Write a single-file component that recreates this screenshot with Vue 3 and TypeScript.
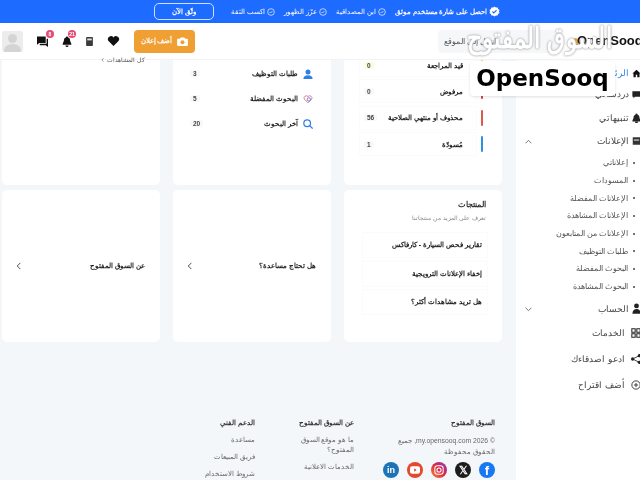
<script setup lang="ts">
const subNav = ['إعلاناتي', 'المسودات', 'الإعلانات المفضلة', 'الإعلانات المشاهدة', 'الإعلانات من المتابعون', 'طلبات التوظيف', 'البحوث المفضلة', 'البحوث المشاهدة'];
const statuses = [
  { label: 'قيد المراجعة', n: '0', color: '#f5d76e', chip: '#fbfbdf' },
  { label: 'مرفوض', n: '0', color: '#d9473f', chip: '#f6f8fa' },
  { label: 'محذوف أو منتهي الصلاحية', n: '56', color: '#d9584f', chip: '#f6f8fa' },
  { label: 'مُسودّة', n: '1', color: '#2f8fe6', chip: '#f6f8fa' },
];
const products = ['تقارير فحص السيارة - كارفاكس', 'إخفاء الإعلانات الترويجية', 'هل تريد مشاهدات أكثر؟'];
const trust = ['ابن المصداقية', 'عزّز الظهور', 'اكسب الثقة'];
</script>

<template>
  <div class="page" dir="rtl">
    <div class="banner">
      <span class="b-main">
        <svg width="11" height="11" viewBox="0 0 24 24"><path fill="#fff" d="M12 1l3 2.400 3.800-.3 1 3.700 3.200 2.100-1.400 3.100 1.400 3.100-3.200 2.100-1 3.700-3.800-.3L12 23l-3-2.400-3.800.3-1-3.700L1 15.100 2.400 12 1 8.900l3.200-2.100 1-3.700 3.800.3z"/><path d="M7.500 12l3 3 6-6" stroke="#1e6bff" stroke-width="2.500" fill="none"/></svg>
        احصل على شارة مستخدم موثق
      </span>
      <span v-for="t in trust" :key="t" class="b-item">
        <svg width="8" height="8" viewBox="0 0 24 24" fill="none" stroke="#fff" stroke-width="2"><circle cx="12" cy="12" r="10"/><path d="M7.500 12l3 3 6-6"/></svg>
        {{ t }}
      </span>
      <button class="b-btn">وثّق الآن</button>
    </div>

    <header class="top">
      <div class="head-right">
        <div class="brand">
          <span class="brand-mark"></span>
          <span class="brand-name">OpenSooq</span>
          <span class="brand-ghost">السوق المفتوح</span>
        </div>
        <div class="search">انتقل إلى الموقع</div>
      </div>
      <div class="head-left">
        <button class="add">
          <svg width="11" height="9" viewBox="0 0 24 20"><path fill="#fff" d="M8 1h8l2 3h4a2 2 0 0 1 2 2v12a2 2 0 0 1-2 2H2a2 2 0 0 1-2-2V6a2 2 0 0 1 2-2h4z"/><circle cx="12" cy="11.500" r="4.500" fill="#f0a033"/></svg>
          أضف إعلان
        </button>
        <svg class="ic" width="13" height="10" viewBox="0 0 24 20"><path fill="#111" d="M12 20 2 10a5.800 5.800 0 0 1 10-7 5.800 5.800 0 0 1 10 7z"/></svg>
        <svg class="ic" width="7" height="9" viewBox="0 0 18 24"><rect width="18" height="24" rx="2" fill="#3a3a3a"/><rect x="3" y="4" width="12" height="5" fill="#ddd"/></svg>
        <span class="ic rel bell">
          <svg width="10" height="11" viewBox="0 0 24 28"><path fill="#111" d="M12 1a3 3 0 0 1 3 3c4 1 5 5 5 9l3 7v2H1v-2l3-7c0-4 1-8 5-9a3 3 0 0 1 3-3zM8 24h8a4 4 0 0 1-8 0z"/></svg>
          <i class="badge">21</i>
        </span>
        <span class="ic rel chat">
          <svg width="11" height="11" viewBox="0 0 24 24"><path fill="#111" d="M0 1h19v14H5l-5 4z"/><path fill="#111" d="M21 6h3v18l-5-4H6v-3h15z"/></svg>
          <i class="badge">8</i>
        </span>
        <div class="avatar"><span class="a-head"></span><span class="a-body"></span></div>
      </div>
    </header>

    <div class="layout">
      <aside class="side">
        <div class="logo-card">OpenSooq</div>
        <div class="nav-row active">
          <svg width="9" height="9" viewBox="0 0 24 24"><path fill="#111" d="M12 2 1 12h3v10h6v-7h4v7h6V12h3z"/></svg>
          <span>الرئيسية</span>
        </div>
        <div class="nav-row r-chat">
          <svg width="9" height="9" viewBox="0 0 24 24"><path fill="#222" d="M1 3h22v15H8l-4 4v-4H1z"/></svg>
          <span>دردشاتي</span>
        </div>
        <div class="nav-row r-bell">
          <svg width="9" height="10" viewBox="0 0 24 26"><path fill="#222" d="M12 1a3 3 0 0 1 3 3c4 1 5 5 5 9l3 7v2H1v-2l3-7c0-4 1-8 5-9a3 3 0 0 1 3-3zM8 23h8a4 4 0 0 1-8 0z"/></svg>
          <span>تنبيهاتي</span>
        </div>
        <div class="nav-row r-ads">
          <svg width="9" height="10" viewBox="0 0 24 24"><path fill="#333" d="M2 2h20v20H2z"/><path fill="#ddd" d="M5 8h14v3H5z"/></svg>
          <span>الإعلانات</span>
          <svg class="chev" width="7" height="5" viewBox="0 0 12 8" fill="none" stroke="#666" stroke-width="1.500"><path d="m1 7 5-5 5 5"/></svg>
        </div>
        <div class="subs">
          <div v-for="s in subNav" :key="s" class="sub"><i></i>{{ s }}</div>
        </div>
        <div class="nav-row r-acc">
          <svg width="9" height="11" viewBox="0 0 24 28"><circle cx="12" cy="7" r="6.500" fill="#222"/><path fill="#222" d="M1 28c0-9 5-13 11-13s11 4 11 13z"/></svg>
          <span>الحساب</span>
          <svg class="chev" width="7" height="5" viewBox="0 0 12 8" fill="none" stroke="#666" stroke-width="1.500"><path d="m1 1 5 5 5-5"/></svg>
        </div>
        <div class="nav-row wide r-srv">
          <svg width="10" height="10" viewBox="0 0 24 24" fill="none" stroke="#222" stroke-width="2.500"><path d="M2 2h8v8H2zM14 2h8v8h-8zM2 14h8v8H2zM14 14h8v8h-8z"/></svg>
          <span>الخدمات</span>
        </div>
        <div class="nav-row wide r-inv">
          <svg width="10" height="10" viewBox="0 0 24 24"><circle cx="20" cy="4" r="4" fill="#222"/><circle cx="20" cy="20" r="4" fill="#222"/><circle cx="4" cy="12" r="4" fill="#222"/><path d="M20 4 4 12l16 8" stroke="#222" stroke-width="2" fill="none"/></svg>
          <span>ادعو اصدقاءك</span>
        </div>
        <div class="nav-row wide r-inv">
          <svg width="10" height="10" viewBox="0 0 24 24" fill="none" stroke="#222" stroke-width="2"><circle cx="12" cy="12" r="10"/><path d="M12 7v10M7 12h10"/></svg>
          <span>أضف اقتراح</span>
        </div>
      </aside>

      <main class="main">
        <div class="grid">
          <section class="card c-top c-status">
            <div class="rows">
              <div v-for="s in statuses" :key="s.label" class="status">
                <i class="bar" :style="{ background: s.color }"></i>
                <div class="status-box">
                  <b>{{ s.label }}</b>
                  <em :style="{ background: s.chip }">{{ s.n }}</em>
                </div>
              </div>
            </div>
          </section>
          <section class="card c-top c-list">
            <div class="lrow">
              <svg width="10" height="10" viewBox="0 0 24 24"><circle cx="12" cy="7" r="6" fill="#2f80e6"/><path fill="#2f80e6" d="M1 24c0-6 4-9 11-9s11 3 11 9z"/></svg>
              <b>طلبات التوظيف</b><em>3</em>
            </div>
            <div class="lrow">
              <svg width="10" height="10" viewBox="0 0 24 24" fill="none" stroke="#e4606d" stroke-width="2"><path d="M12 21 3 12a5.500 5.500 0 0 1 9-6 5.500 5.500 0 0 1 9 6z"/><circle cx="14" cy="13" r="4" stroke="#2f80e6"/></svg>
              <b>البحوث المفضلة</b><em>5</em>
            </div>
            <div class="lrow">
              <svg width="10" height="10" viewBox="0 0 24 24" fill="none" stroke="#2f80e6" stroke-width="3"><circle cx="10" cy="10" r="8"/><path d="m16 16 7 7"/></svg>
              <b>آخر البحوث</b><em>20</em>
            </div>
          </section>
          <section class="card c-top">
            <div class="left-note">كل المشاهدات
              <svg width="3" height="4" viewBox="0 0 8 12" fill="none" stroke="#666" stroke-width="2"><path d="M7 1 2 6l5 5"/></svg>
            </div>
          </section>

          <section class="card c-bot products">
            <h3>المنتجات</h3>
            <p>تعرف على المزيد من منتجاتنا</p>
            <div v-for="p in products" :key="p" class="prod">{{ p }}</div>
          </section>
          <section class="card c-bot link">
            <b>هل تحتاج مساعدة؟</b>
            <svg width="5" height="8" viewBox="0 0 8 12" fill="none" stroke="#444" stroke-width="1.500"><path d="M7 1 2 6l5 5"/></svg>
          </section>
          <section class="card c-bot link">
            <b>عن السوق المفتوح</b>
            <svg width="5" height="8" viewBox="0 0 8 12" fill="none" stroke="#444" stroke-width="1.500"><path d="M7 1 2 6l5 5"/></svg>
          </section>
        </div>

        <footer class="foot">
          <div class="f-col f-first">
            <h4>السوق المفتوح</h4>
            <p class="copy">© my.opensooq.com 2026, جميع الحقوق محفوظة</p>
            <div class="social">
              <span class="s fb">f</span>
              <span class="s x">𝕏</span>
              <span class="s ig">
                <svg width="10" height="10" viewBox="0 0 24 24" fill="none" stroke="#fff" stroke-width="2.500"><rect x="2" y="2" width="20" height="20" rx="6"/><circle cx="12" cy="12" r="5"/></svg>
              </span>
              <span class="s yt">
                <svg width="10" height="8" viewBox="0 0 24 18"><rect width="24" height="18" rx="5" fill="#fff"/><path fill="#e2492f" d="m10 5 6 4-6 4z"/></svg>
              </span>
              <span class="s li">in</span>
            </div>
          </div>
          <div class="f-col f-about">
            <h4>عن السوق المفتوح</h4>
            <p>ما هو موقع السوق المفتوح؟</p>
            <p>الخدمات الاعلانية</p>
          </div>
          <div class="f-col f-support">
            <h4>الدعم الفني</h4>
            <p>مساعدة</p>
            <p>فريق المبيعات</p>
            <p>شروط الاستخدام</p>
          </div>
        </footer>
      </main>
    </div>
  </div>
</template>

<style>
html, body { margin: 0; overflow: hidden; }
</style>

<style scoped>
.page {
  width: 640px;
  height: 480px;
  overflow: hidden;
  background: #f4f7f9;
  font-family: "Liberation Sans", sans-serif;
  color: #222;
  filter: blur(0.3px);
}
.banner {
  height: 23px;
  background: #1e6bff;
  color: #fff;
  display: flex;
  align-items: center;
  gap: 9px;
  padding-right: 140px;
  font-size: 7.300px;
}
.b-main { display: flex; align-items: center; gap: 2px; font-weight: 700; font-size: 6.500px; }
.b-item { display: flex; align-items: center; gap: 2px; }
.b-btn {
  width: 60px;
  height: 17px;
  margin-right: 8px;
  border: 1px solid #cfe0ff;
  border-radius: 5px;
  background: transparent;
  color: #fff;
  font: 700 7px "Liberation Sans", sans-serif;
}
.top {
  height: 37px;
  box-sizing: border-box;
  background: #fff;
  display: flex;
  align-items: center;
  justify-content: space-between;
  border-bottom: 1px solid #f1f3f5;
}
.head-right { display: flex; align-items: center; height: 100%; }
.head-left { display: flex; align-items: center; gap: 14px; padding-left: 2px; }
.brand { width: 80px; height: 36px; position: relative; flex: none; }
.brand-name {
  position: absolute;
  left: 17px;
  top: 10px;
  direction: ltr;
  font: 700 13px "Liberation Sans", sans-serif;
  color: #111;
  white-space: nowrap;
}
.brand-mark { position: absolute; left: 13px; top: 15px; width: 5px; height: 11px; border-radius: 3px; background: #f0a033; }
.brand-ghost {
  position: absolute;
  right: 28px;
  top: -2px;
  font-size: 29px;
  font-weight: 700;
  color: #fff;
  white-space: nowrap;
  text-shadow: 0 0 2px #999, 0 0 3px #bbb;
  transform: scaleX(.8);
  transform-origin: right center;
}
.search {
  width: 122px;
  height: 23px;
  box-sizing: border-box;
  background: #f5f7f9;
  border-radius: 4px;
  font-size: 8px;
  color: #555;
  display: flex;
  align-items: center;
  justify-content: flex-end;
  padding-left: 6px;
}
.add {
  width: 61px;
  height: 23px;
  border: 0;
  border-radius: 4px;
  background: #f0a033;
  color: #fff;
  font: 700 6.800px "Liberation Sans", sans-serif;
  display: flex;
  align-items: center;
  justify-content: center;
  gap: 5px;
  white-space: nowrap;
  padding: 0;
}
.ic { display: inline-flex; flex: none; }
.rel { position: relative; }
.badge {
  position: absolute;
  top: -6px;
  min-width: 8px;
  height: 8px;
  border-radius: 4px;
  background: #e84a73;
  color: #fff;
  font: 700 5px/8px "Liberation Sans", sans-serif;
  text-align: center;
}
.bell .badge { left: 6px; }
.chat .badge { left: 9px; }
.avatar {
  width: 21px;
  height: 21px;
  border-radius: 2px;
  background: #ececec;
  position: relative;
  overflow: hidden;
  flex: none;
}
.a-head { position: absolute; left: 6px; top: 3px; width: 9px; height: 9px; border-radius: 50%; background: #d4d4d4; }
.a-body { position: absolute; left: 2px; top: 13px; width: 17px; height: 12px; border-radius: 50%; background: #d4d4d4; }
.layout { display: flex; height: 420px; }
.side {
  width: 124px;
  flex: none;
  background: #fff;
  position: relative;
  z-index: 2;
  padding-top: 5px;
  box-sizing: border-box;
}
.logo-card {
  position: absolute;
  right: 25px;
  top: 1px;
  width: 145px;
  height: 35px;
  background: #fff;
  border-radius: 4px;
  box-shadow: 0 1px 3px rgba(0,0,0,.12);
  font: 700 23px/35px "DejaVu Sans", sans-serif;
  color: #000;
  text-align: center;
  direction: ltr;
  z-index: 3;
}
.nav-row {
  height: 16px;
  display: flex;
  align-items: center;
  gap: 3px;
  font-size: 9px;
  color: #444;
  position: relative;
  margin-right: -1px;
}
.nav-row svg { flex: none; }
.nav-row.active { color: #2f80e6; }
.r-chat { margin-top: 5px; }
.r-bell { margin-top: 8px; }
.r-ads { margin-top: 7px; }
.r-acc { margin-top: 5px; }
.r-srv { margin-top: 8px; }
.r-inv { margin-top: 10px; }
.wide { gap: 6px; }
.chev { position: absolute; left: 9px; top: 6px; }
.subs { margin-top: 5px; }
.sub {
  height: 17.700px;
  display: flex;
  align-items: center;
  gap: 5px;
  padding-right: 5px;
  font-size: 7.500px;
  color: #555;
}
.sub i { width: 2px; height: 2px; background: #444; border-radius: 50%; flex: none; }
.main { flex: 1; min-width: 0; }
.grid {
  display: grid;
  grid-template-columns: repeat(3, 158px);
  grid-template-rows: 125px 152px;
  gap: 5px 13px;
  padding: 0 14px 0 2px;
}
.card { background: #fff; border-radius: 5px; box-sizing: border-box; }
.c-top { border-radius: 0 0 5px 5px; }
.c-status { overflow: hidden; }
.rows { margin-top: -8px; padding: 0 19px 0 15px; }
.status { display: flex; align-items: center; gap: 4px; height: 26.300px; }
.bar { width: 2px; height: 16px; border-radius: 1px; flex: none; }
.status-box {
  flex: 1;
  display: flex;
  justify-content: space-between;
  align-items: center;
  padding: 0 13px 0 4px;
  height: 22px;
  border: 1px solid #fbfbfb;
}
.status-box b { font-size: 7.300px; font-weight: 700; color: #222; white-space: nowrap; }
.lrow b { font-size: 7px; font-weight: 700; color: #222; white-space: nowrap; }
em { font-style: normal; font-size: 6.500px; font-weight: 700; color: #444; background: #f6f8fa; padding: 0 3px; border-radius: 2px; }
.c-list { padding: 0 18px 0 17px; }
.lrow { display: flex; align-items: center; gap: 5px; height: 25px; }
.lrow:first-child { margin-top: 1px; }
.lrow em { margin-right: auto; }
.left-note {
  position: relative;
  top: -3px;
  height: 6px;
  padding: 0 15px 0 0;
  display: flex;
  align-items: center;
  gap: 3px;
  font-size: 5.500px;
  line-height: 6px;
  color: #555;
  white-space: nowrap;
}
.products { padding: 8px 16px 0 18px; }
.products h3 { margin: 0; font-size: 8.200px; font-weight: 700; color: #333; line-height: 13px; }
.products p { margin: 2px 0 8px; font-size: 6px; color: #888; line-height: 11px; }
.prod {
  height: 24px;
  margin: 0 -2px 2.500px 0;
  padding-right: 5px;
  display: flex;
  align-items: center;
  font-size: 7px;
  font-weight: 700;
  border: 1px solid #fbfbfb;
}
.link { display: flex; align-items: center; justify-content: space-between; padding: 0 15px 1px 14px; }
.link b { font-size: 7px; }
.foot {
  display: flex;
  padding: 75px 21px 0 0;
  font-size: 6.500px;
  color: #666;
}
.f-col h4 { margin: 0 0 6px; font-size: 7px; font-weight: 700; color: #333; line-height: 12px; white-space: nowrap; }
.f-col p { margin: 0 0 7px; line-height: 10px; }
.f-first { width: 111px; flex: none; }
.f-first .copy { font-size: 6.800px; line-height: 11px; margin-bottom: 5px; }
.f-about { width: 60px; margin-right: 30px; flex: none; }
.f-support { width: 40px; margin-right: 39px; white-space: nowrap; flex: none; }
.social { display: flex; gap: 8px; }
.s {
  width: 16px;
  height: 16px;
  border-radius: 50%;
  color: #fff;
  display: flex;
  align-items: center;
  justify-content: center;
  font: 700 9px "Liberation Sans", sans-serif;
  flex: none;
}
.fb { background: #1877f2; font-size: 13px; padding-top: 1px; box-sizing: border-box; }
.x { background: #1c1c1c; font-size: 11px; }
.ig { background: linear-gradient(45deg, #f09433, #dc2743 50%, #8a3ab9); }
.yt { background: #e2492f; }
.li { background: #1d74b5; }
</style>
